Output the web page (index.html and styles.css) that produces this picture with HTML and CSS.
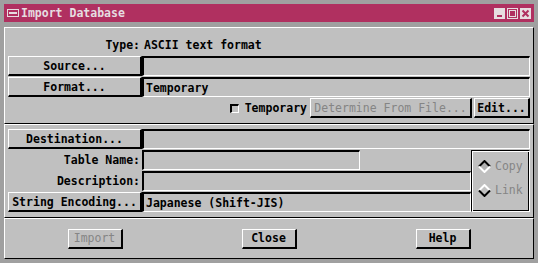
FILE: index.html
```html
<!DOCTYPE html>
<html lang="en">
<head>
    <meta charset="UTF-8">
    <title>Import Database</title>
    <link rel="stylesheet" href="styles.css">
</head>
<body>
    <div class="window">
        <div class="titlebar">
            <svg class="menu-icon" width="12" height="8" viewBox="0 0 12 8">
                <rect x="0.5" y="0.5" width="11" height="7" fill="none" stroke="#e6dde0"/>
                <rect x="2" y="3" width="8" height="2" fill="#e6dde0"/>
            </svg>
            <span class="title">Import Database</span>
            <div class="win-btns">
                <svg width="11" height="11" viewBox="0 0 11 11">
                    <rect width="11" height="11" fill="#e6dde0"/>
                    <rect x="3" y="7" width="5" height="2" fill="#b03060"/>
                </svg>
                <svg width="11" height="11" viewBox="0 0 11 11">
                    <rect width="11" height="11" fill="#e6dde0"/>
                    <rect x="1" y="1" width="9" height="9" fill="#b03060"/>
                    <rect x="2.5" y="2.5" width="6" height="6" fill="none" stroke="#e6dde0"/>
                </svg>
                <svg width="11" height="11" viewBox="0 0 11 11">
                    <rect width="11" height="11" fill="#e6dde0"/>
                    <path d="M2.5 2.5 L8.5 8.5 M8.5 2.5 L2.5 8.5" stroke="#b03060" stroke-width="2"/>
                </svg>
            </div>
        </div>

        <div class="panel panel-source">
            <div class="row">
                <div class="label">Type:</div>
                <div class="value">ASCII text format</div>
            </div>
            <div class="row">
                <button class="btn">Source...</button>
                <div class="field"></div>
            </div>
            <div class="row">
                <button class="btn">Format...</button>
                <div class="field">Temporary</div>
            </div>
            <div class="options">
                <span class="check"></span>
                <span class="check-label">Temporary</span>
                <button class="btn btn-determine disabled">Determine From File...</button>
                <button class="btn btn-edit">Edit...</button>
            </div>
        </div>

        <div class="panel panel-dest">
            <button class="btn">Destination...</button>
            <div class="field field-wide"></div>

            <div class="label">Table Name:</div>
            <div class="field field-short"></div>
            <div class="mode-box">
                <div class="radio disabled">
                    <svg width="13" height="13" viewBox="0 0 13 13">
                        <polygon points="6.5,1 12,6.5 6.5,12 1,6.5" fill="#b0b0b0"/>
                        <path d="M1 6.5 L6.5 1 L12 6.5" fill="none" stroke="#000" stroke-width="2"/>
                        <path d="M1 6.5 L6.5 12 L12 6.5" fill="none" stroke="#fff" stroke-width="2"/>
                    </svg>
                    <span>Copy</span>
                </div>
                <div class="radio disabled">
                    <svg width="13" height="13" viewBox="0 0 13 13">
                        <path d="M1 6.5 L6.5 1 L12 6.5" fill="none" stroke="#fff" stroke-width="2"/>
                        <path d="M1 6.5 L6.5 12 L12 6.5" fill="none" stroke="#000" stroke-width="2"/>
                    </svg>
                    <span>Link</span>
                </div>
            </div>

            <div class="label">Description:</div>
            <div class="field"></div>

            <button class="btn">String Encoding...</button>
            <div class="field">Japanese (Shift-JIS)</div>
        </div>

        <div class="panel panel-actions">
            <button class="btn btn-action disabled">Import</button>
            <button class="btn btn-action">Close</button>
            <button class="btn btn-action">Help</button>
        </div>
    </div>
</body>
</html>
```

FILE: styles.css
```css
body {
    margin: 0;
    background: #a0a0a0;
    font-family: "DejaVu Sans Mono", "Liberation Mono", monospace;
    font-size: 11.5px;
    font-weight: bold;
    color: #000;
}
.window {
    padding: 4px;
}
.titlebar {
    height: 18px;
    background: #b03060;
    color: #e6dde0;
    display: flex;
    align-items: center;
    padding: 0 3px;
    margin-bottom: 5px;
}
.menu-icon {
    margin-right: 2px;
}
.title {
    flex: 1;
}
.win-btns {
    display: flex;
    gap: 2px;
}
.win-btns svg {
    display: block;
}
.panel {
    background: #c0c0c0;
    border: 1px solid;
    border-color: #fff #000 #000 #fff;
    padding: 0 3px;
}
.panel-source {
    display: flex;
    flex-direction: column;
    gap: 1px;
    padding-top: 7px;
    padding-bottom: 5px;
}
.row {
    display: grid;
    grid-template-columns: 134px 1fr;
    height: 20px;
}
.label {
    text-align: right;
    padding-right: 2px;
    align-self: center;
}
.value {
    padding-left: 2px;
    align-self: center;
}
.btn {
    box-sizing: border-box;
    height: 20px;
    margin: 0;
    padding: 0;
    background: #c0c0c0;
    border-style: solid;
    border-width: 1px 2px 2px 1px;
    border-color: #fff #000 #000 #fff;
    font: inherit;
    color: #000;
    text-align: center;
}
.disabled {
    color: #858585;
    font-weight: normal;
}
.field {
    box-sizing: border-box;
    height: 20px;
    border-style: solid;
    border-width: 2px 1px 1px 2px;
    border-color: #000 #fff #fff #000;
    padding-left: 2px;
    display: flex;
    align-items: center;
}
.options {
    display: flex;
    justify-content: flex-end;
    align-items: center;
    height: 20px;
}
.check {
    box-sizing: border-box;
    width: 9px;
    height: 9px;
    border-style: solid;
    border-width: 2px 1px 1px 2px;
    border-color: #000 #fff #fff #000;
    margin-right: 6px;
}
.check-label {
    margin-right: 3px;
}
.btn-determine {
    width: 162px;
    margin-right: 2px;
}
.btn-edit {
    width: 56px;
}
.panel-dest {
    display: grid;
    grid-template-columns: 134px 329px 59px;
    grid-auto-rows: 20px;
    row-gap: 1px;
    padding-top: 4px;
    padding-bottom: 5px;
}
.field-wide {
    grid-column: 2 / 4;
}
.field-short {
    width: 218px;
}
.mode-box {
    grid-column: 3;
    grid-row: 2 / 5;
    box-sizing: border-box;
    border: 1px solid;
    border-color: #000 #fff #fff #000;
    box-shadow: inset 1px 1px 0 #fff, inset -1px -1px 0 #000;
    padding: 6px 0 0 6px;
    display: flex;
    flex-direction: column;
    gap: 6px;
}
.radio {
    display: flex;
    align-items: center;
    gap: 4px;
    height: 18px;
}
.radio svg {
    display: block;
}
.panel-actions {
    height: 39px;
    display: grid;
    grid-template-columns: repeat(3, 1fr);
    justify-items: center;
    align-items: center;
}
.btn-action {
    width: 55px;
}
```
